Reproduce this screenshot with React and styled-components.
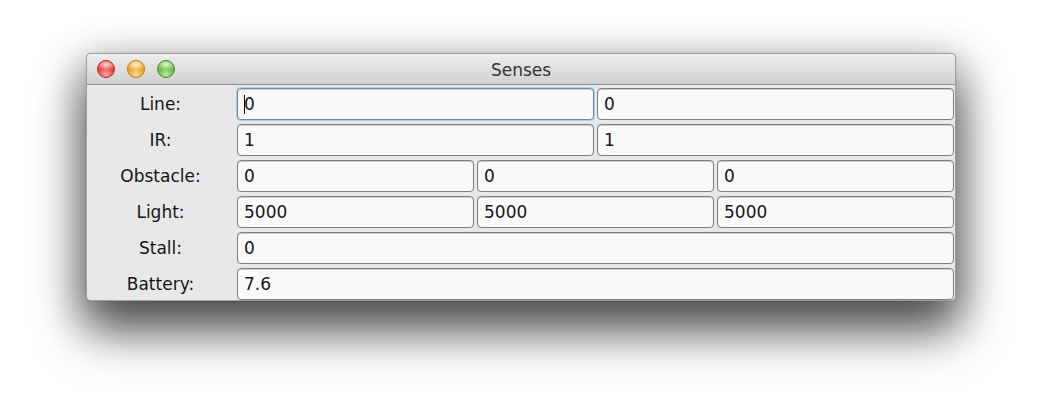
import React from 'react';
import styled, { createGlobalStyle } from 'styled-components';

const rows = [
  { label: 'Line:', values: ['0', '0'], focus: 0 },
  { label: 'IR:', values: ['1', '1'] },
  { label: 'Obstacle:', values: ['0', '0', '0'] },
  { label: 'Light:', values: ['5000', '5000', '5000'] },
  { label: 'Stall:', values: ['0'] },
  { label: 'Battery:', values: ['7.6'] },
];

function App() {
  return (
    <>
      <GlobalStyle />
      <Page>
        <Window>
          <TitleBar>
            <Lights>
              <Light color="#f0403a" rim="#a8302a" />
              <Light color="#f2a824" rim="#b77d1c" />
              <Light color="#66c13c" rim="#3f8f28" />
            </Lights>
            <Title>Senses</Title>
          </TitleBar>
          <Content>
            {rows.map((row) => (
              <Row key={row.label}>
                <Label>{row.label}</Label>
                <Fields cols={row.values.length}>
                  {row.values.map((v, i) => (
                    <Field key={i} focused={row.focus === i}>
                      {row.focus === i && <Caret />}
                      {v}
                    </Field>
                  ))}
                </Fields>
              </Row>
            ))}
          </Content>
        </Window>
      </Page>
    </>
  );
}

export default App;

const GlobalStyle = createGlobalStyle`
  html, body {
    margin: 0;
    padding: 0;
    background: #ffffff;
  }
`;

const Page = styled.div`
  width: 1041px;
  height: 420px;
  padding: 53px 0 0 86px;
  box-sizing: border-box;
  overflow: hidden;
  font-family: "DejaVu Sans", "Liberation Sans", sans-serif;
`;

const Window = styled.div`
  width: 870px;
  height: 248px;
  box-sizing: border-box;
  background: #e8e8e8;
  border: 1px solid #a0a0a0;
  border-radius: 5px 5px 4px 4px;
  box-shadow: 0 30px 50px 0 rgba(0, 0, 0, 0.6), 0 12px 40px 6px rgba(0, 0, 0, 0.3),
    0 0 1px rgba(0, 0, 0, 0.4);
  display: flex;
  flex-direction: column;
  overflow: hidden;
`;

const TitleBar = styled.div`
  position: relative;
  height: 30px;
  flex: none;
  background: linear-gradient(#eeeeee, #d0d0d0);
  border-bottom: 1px solid #8f8f8f;
  display: flex;
  align-items: center;
  justify-content: center;
`;

const Lights = styled.div`
  position: absolute;
  left: 10px;
  top: 6px;
  display: flex;
  gap: 12px;
`;

const Light = styled.div`
  width: 18px;
  height: 18px;
  box-sizing: border-box;
  border-radius: 50%;
  border: 1px solid ${(p) => p.rim};
  background: radial-gradient(ellipse 60% 35% at 50% 22%, rgba(255, 255, 255, 0.85) 0%, transparent 100%),
    radial-gradient(circle at 50% 85%, rgba(255, 255, 255, 0.55) 0%, transparent 50%),
    ${(p) => p.color};
`;

const Title = styled.div`
  font-size: 17px;
  color: #333333;
  padding-top: 1px;
`;

const Content = styled.div`
  flex: 1;
  display: flex;
  flex-direction: column;
  gap: 4px;
  padding: 3px 1px 0 0;
`;

const Row = styled.div`
  display: flex;
  gap: 3px;
  height: 32px;
`;

const Label = styled.div`
  width: 147px;
  flex: none;
  display: flex;
  align-items: center;
  justify-content: center;
  font-size: 17px;
  color: #151515;
`;

const Fields = styled.div`
  flex: 1;
  display: grid;
  grid-template-columns: repeat(${(p) => p.cols}, 1fr);
  gap: 3px;
`;

const Field = styled.div`
  box-sizing: border-box;
  height: 32px;
  background: #fafafa;
  border: 1.5px solid ${(p) => (p.focused ? '#6489c0' : '#7e7e7e')};
  border-radius: 4px;
  box-shadow: ${(p) =>
    p.focused
      ? '0 0 0 1px #b3c9e8, inset 0 1px 1px rgba(0,0,0,0.18)'
      : 'inset 0 1px 1px rgba(0,0,0,0.18)'};
  display: flex;
  align-items: center;
  padding-left: 6px;
  font-size: 17px;
  color: #151515;
`;

const Caret = styled.span`
  display: inline-block;
  width: 1px;
  height: 19px;
  background: #000;
  margin-right: -1px;
`;
